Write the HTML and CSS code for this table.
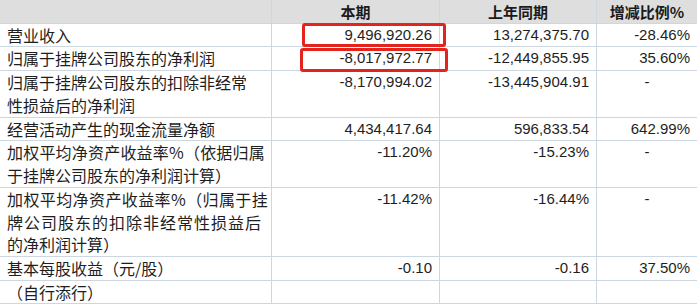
FILE: index.html
```html
<!DOCTYPE html>
<html lang="zh-CN">
<head>
<meta charset="utf-8">
<title>主要财务数据</title>
<link rel="stylesheet" href="styles.css">
</head>
<body>
<div class="sheet">
  <div class="th"></div>
  <div class="th">本期</div>
  <div class="th">上年同期</div>
  <div class="th">增减比例%</div>

  <div class="lb">营业收入</div>
  <div class="num hl"><span class="mark mark-a"></span>9,496,920.26</div>
  <div class="num">13,274,375.70</div>
  <div class="num">-28.46%</div>

  <div class="lb">归属于挂牌公司股东的净利润</div>
  <div class="num hl"><span class="mark mark-b"></span>-8,017,972.77</div>
  <div class="num">-12,449,855.95</div>
  <div class="num">35.60%</div>

  <div class="lb"><span class="ln">归属于挂牌公司股东的扣除非经常</span><span class="ln">性损益后的净利润</span></div>
  <div class="num">-8,170,994.02</div>
  <div class="num">-13,445,904.91</div>
  <div class="num dash">-</div>

  <div class="lb">经营活动产生的现金流量净额</div>
  <div class="num">4,434,417.64</div>
  <div class="num">596,833.54</div>
  <div class="num">642.99%</div>

  <div class="lb"><span class="ln sp-a">加权平均净资产收益率%（依据归属</span><span class="ln">于挂牌公司股东的净利润计算）</span></div>
  <div class="num">-11.20%</div>
  <div class="num">-15.23%</div>
  <div class="num dash">-</div>

  <div class="lb"><span class="ln sp-b">加权平均净资产收益率%（归属于挂</span><span class="ln sp-c">牌公司股东的扣除非经常性损益后</span><span class="ln">的净利润计算）</span></div>
  <div class="num">-11.42%</div>
  <div class="num">-16.44%</div>
  <div class="num dash">-</div>

  <div class="lb">基本每股收益（元/股）</div>
  <div class="num">-0.10</div>
  <div class="num">-0.16</div>
  <div class="num">37.50%</div>

  <div class="lb">（自行添行）</div>
  <div class="num"></div>
  <div class="num"></div>
  <div class="num"></div>
</div>
</body>
</html>
```

FILE: styles.css
```css
html, body {
  margin: 0;
  padding: 0;
  background: #ffffff;
}

.sheet {
  display: grid;
  grid-template-columns: 271px 167px 156px 100px;
  grid-template-rows: 23px 22px 23px 46px 22px 46px 68px 23px 22px;
  gap: 1px;
  width: 697px;
  padding-bottom: 1px;
  background: #ccd7e2;
  color: #1e1e1e;
}

.sheet > div {
  background: #ffffff;
  overflow: visible;
}

.th {
  background: #dedede !important;
  font-family: "Noto Sans CJK SC", "Noto Sans", sans-serif;
  font-weight: 700;
  font-size: 15px;
  line-height: 23px;
  text-align: center;
  color: #1a1a1a;
}

.lb {
  font-family: "Noto Sans CJK SC", sans-serif;
  font-size: 16px;
  line-height: 22.5px;
  padding: 0 0 0 7px;
  white-space: nowrap;
}

.ln {
  display: block;
}

.sp-a {
  letter-spacing: 0.2px;
}

.sp-b {
  letter-spacing: 0.4px;
}

.sp-c {
  letter-spacing: 1px;
}

.num {
  position: relative;
  font-family: "Liberation Sans", Arial, sans-serif;
  font-size: 15px;
  line-height: 22px;
  text-align: right;
  padding-right: 7px;
}

.dash {
  text-align: center;
  padding-right: 0;
}

.mark {
  position: absolute;
  z-index: 2;
  border: 3px solid #e4231d;
  border-radius: 3px;
  pointer-events: none;
}

.mark-a {
  left: 30px;
  right: -7px;
  top: -1px;
  bottom: -1px;
}

.mark-b {
  left: 28px;
  right: -9px;
  top: 1px;
  bottom: -2px;
}
```
